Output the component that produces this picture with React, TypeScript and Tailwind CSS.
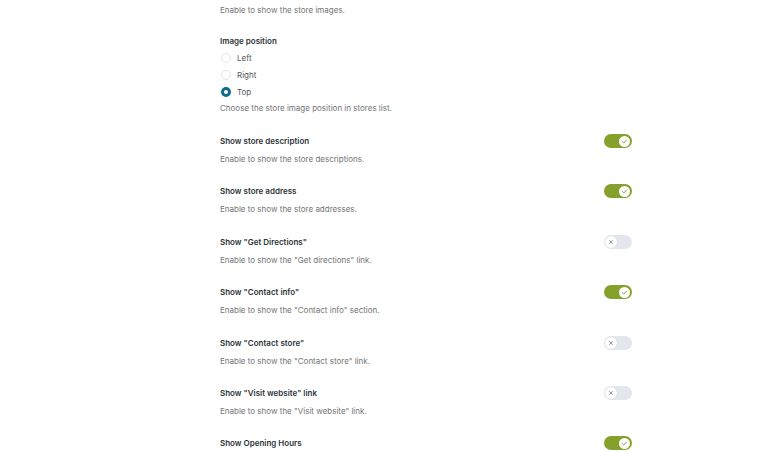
import React from 'react';

type Row = { title: string; desc?: string; on: boolean };

const rows: Row[] = [
  { title: 'Show store description', desc: 'Enable to show the store descriptions.', on: true },
  { title: 'Show store address', desc: 'Enable to show the store addresses.', on: true },
  { title: 'Show "Get Directions"', desc: 'Enable to show the "Get directions" link.', on: false },
  { title: 'Show "Contact info"', desc: 'Enable to show the "Contact info" section.', on: true },
  { title: 'Show "Contact store"', desc: 'Enable to show the "Contact store" link.', on: false },
  { title: 'Show "Visit website" link', desc: 'Enable to show the "Visit website" link.', on: false },
  { title: 'Show Opening Hours', on: true },
];

function Toggle({ on }: { on: boolean }) {
  if (on) {
    return (
      <div className="flex h-[14px] w-[28px] items-center justify-end rounded-full bg-[#86a02c] pr-[2px]">
        <div className="flex h-[11px] w-[11px] items-center justify-center rounded-full bg-white">
          <svg width="7" height="7" viewBox="0 0 10 10" fill="none">
            <path d="M2 5.2l2 2 4-4.4" stroke="#86a02c" strokeWidth="1.4" strokeLinecap="round" strokeLinejoin="round" />
          </svg>
        </div>
      </div>
    );
  }
  return (
    <div className="flex h-[14px] w-[28px] items-center rounded-full bg-[#e3e6ec] pl-[1px]">
      <div className="flex h-[12px] w-[12px] items-center justify-center rounded-full bg-white shadow-[0_0_1px_rgba(0,0,0,0.15)]">
        <svg width="6" height="6" viewBox="0 0 10 10" fill="none">
          <path d="M2.5 2.5l5 5M7.5 2.5l-5 5" stroke="#8c8f94" strokeWidth="1.6" strokeLinecap="round" />
        </svg>
      </div>
    </div>
  );
}

function Radio({ label, checked }: { label: string; checked?: boolean }) {
  return (
    <div className="flex h-[17px] items-center gap-[6px] pl-px">
      {checked ? (
        <span className="flex h-[10px] w-[10px] items-center justify-center rounded-full bg-[#106a8c]">
          <span className="h-[4px] w-[4px] rounded-full bg-white" />
        </span>
      ) : (
        <span className="h-[10px] w-[10px] rounded-full border border-[#e2e4e7] bg-white" />
      )}
      <span className="text-[8px] text-[#50575e]">{label}</span>
    </div>
  );
}

export default function App() {
  return (
    <div className="h-[452px] w-[769px] overflow-hidden bg-white font-['Inter',sans-serif]">
      <div className="ml-[220px] w-[412px] -mt-[1px]">
        <p className="text-[8px] leading-[22px] text-[#757575]">Enable to show the store images.</p>

        <div className="mt-[14px]">
          <p className="text-[8px] font-semibold leading-[12px] text-[#2c3338]">Image position</p>
          <div className="mt-[2px] flex flex-col">
            <Radio label="Left" />
            <Radio label="Right" />
            <Radio label="Top" checked />
          </div>
          <p className="mt-[2px] text-[8px] leading-[12px] text-[#757575]">Choose the store image position in stores list.</p>
        </div>

        <div className="mt-[21px] flex flex-col">
          {rows.map((r) => (
            <div key={r.title} className="flex h-[50.4px] items-start justify-between">
              <div className="flex flex-col">
                <p className="text-[8px] font-semibold leading-[12px] text-[#2c3338]">{r.title}</p>
                {r.desc && <p className="mt-[6px] text-[8px] leading-[12px] text-[#757575]">{r.desc}</p>}
              </div>
              <div className="-mt-[1px]">
                <Toggle on={r.on} />
              </div>
            </div>
          ))}
        </div>
      </div>
    </div>
  );
}
